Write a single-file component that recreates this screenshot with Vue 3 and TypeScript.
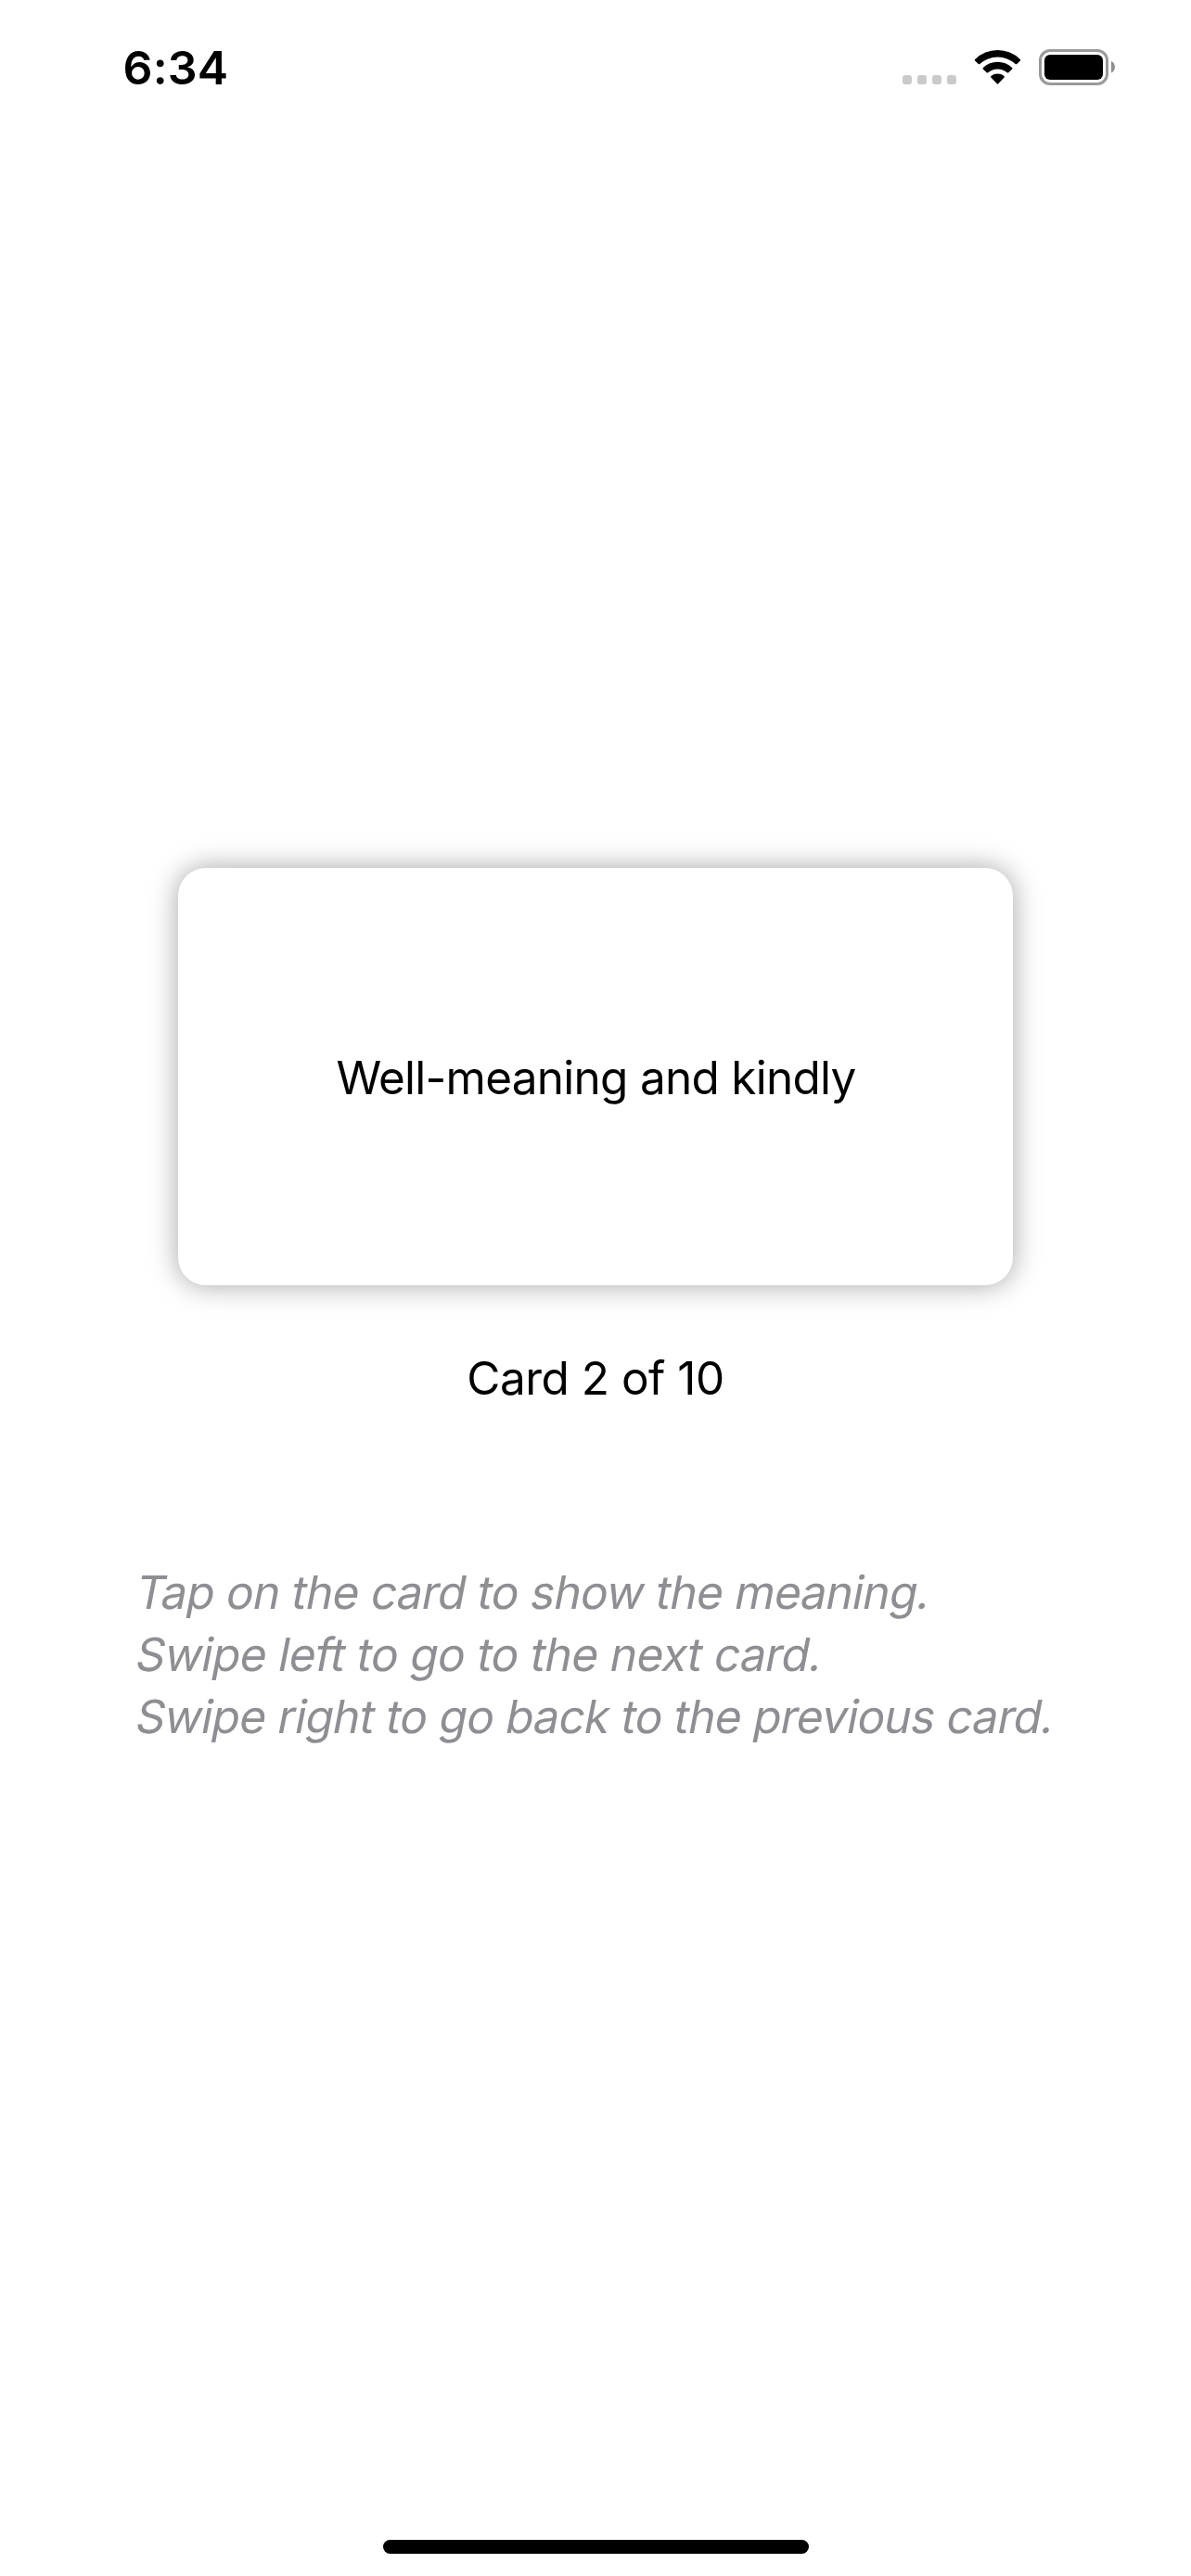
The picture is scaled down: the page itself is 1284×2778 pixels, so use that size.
<script setup lang="ts">
import { ref } from 'vue'

interface Hint {
  text: string
  tracking: number
}

const total = 10
const current = ref(2)
const meaning = ref('Well-meaning and kindly')
const hints: Hint[] = [
  { text: 'Tap on the card to show the meaning.', tracking: -0.73 },
  { text: 'Swipe left to go to the next card.', tracking: -0.6 },
  { text: 'Swipe right to go back to the previous card.', tracking: -0.72 },
]
</script>

<template>
  <div class="screen">
    <header class="status">
      <span class="time">6:34</span>
      <div class="indicators">
        <div class="dots"><i v-for="n in 4" :key="n"></i></div>
        <svg class="wifi" width="51" height="39" viewBox="0 0 51 39">
          <path d="M1.2 10.9A34.5 34.5 0 0 1 49.8 10.9Q50.6 11.6 49.9 12.4L46.2 16Q45.5 16.7 44.7 16A28.6 28.6 0 0 0 6.3 16Q5.5 16.7 4.8 16L1.1 12.4Q0.4 11.6 1.2 10.9Z" />
          <path d="M9.9 20A22.6 22.6 0 0 1 41.1 20Q41.9 20.7 41.2 21.4L37.3 25.3Q36.6 25.9 35.8 25.3A15.8 15.8 0 0 0 15.2 25.3Q14.4 25.9 13.7 25.3L9.8 21.4Q9.1 20.7 9.9 20Z" />
          <path d="M18.4 29.1A11.4 11.4 0 0 1 32.6 29.1Q33.3 29.8 32.6 30.5L26.2 37.3Q25.5 38 24.8 37.3L18.4 30.5Q17.7 29.8 18.4 29.1Z" />
        </svg>
        <svg class="battery" width="83" height="39" viewBox="0 0 83 39">
          <rect x="1.5" y="1.5" width="72" height="36" rx="10.5" fill="none" stroke="#9a9a9a" stroke-width="3" />
          <rect x="6" y="6" width="63" height="27" rx="6" />
          <path d="M78 13A7 7 0 0 1 78 25.6Z" fill="#8f8f8f" />
        </svg>
      </div>
    </header>
    <main>
      <section class="card"><span class="meaning">{{ meaning }}</span></section>
      <p class="count">Card {{ current }} of {{ total }}</p>
      <div class="hints">
        <p v-for="hint in hints" :key="hint.text">
          <span :style="{ letterSpacing: hint.tracking + 'px' }">{{ hint.text }}</span>
        </p>
      </div>
    </main>
    <div class="home"></div>
  </div>
</template>

<style>
body {
  background: #fff;
}
</style>

<style scoped>
.screen {
  display: flex;
  flex-direction: column;
  align-items: center;
  box-sizing: border-box;
  width: 1284px;
  height: 2778px;
  padding-bottom: 24px;
  background: #fff;
  color: #000;
  font-family: Inter, "Liberation Sans", sans-serif;
  font-size: 49.5px;
  line-height: 67px;
  white-space: nowrap;
}
.status {
  display: flex;
  justify-content: space-between;
  box-sizing: border-box;
  width: 100%;
  height: 141px;
  padding: 43px 81px 0 132.5px;
}
.time {
  font-size: 50px;
  font-weight: 600;
  line-height: 60px;
  letter-spacing: 0.2px;
}
.indicators {
  display: flex;
  align-items: flex-start;
  padding-top: 10px;
}
.dots {
  display: flex;
  gap: 6px;
  margin: 28px 19px 0 0;
}
.dots i {
  width: 10px;
  height: 10px;
  border-radius: 3px;
  background: #cacaca;
}
.wifi {
  margin-right: 19px;
}
main {
  display: flex;
  flex-direction: column;
  align-items: center;
  flex: 1;
  width: 100%;
  padding-top: 795px;
}
.card {
  display: flex;
  align-items: center;
  justify-content: center;
  box-sizing: border-box;
  width: 900px;
  height: 450px;
  padding: 2px 0 0 1px;
  border-radius: 30px;
  background: #fff;
  box-shadow: 0 0 30px rgba(0, 0, 0, 0.36);
}
.meaning {
  letter-spacing: -0.74px;
}
.count {
  margin: 67px 0 0;
  letter-spacing: -0.5px;
}
.hints {
  width: 996px;
  margin-top: 164px;
  color: #8e8e93;
}
.hints p {
  margin: 0;
}
.hints span {
  display: inline-block;
  transform: skewX(-11deg);
  transform-origin: 0 51px;
}
.home {
  width: 459px;
  height: 15px;
  border-radius: 8px;
  background: #000;
}
</style>
